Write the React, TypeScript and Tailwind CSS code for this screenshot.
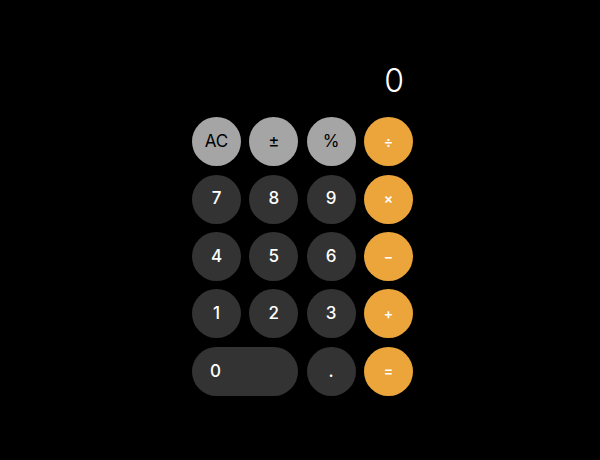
type Key = {
    label: string
    kind: 'fn' | 'num' | 'op'
    wide?: boolean
}

const keys: Key[] = [
    { label: 'AC', kind: 'fn' },
    { label: '±', kind: 'fn' },
    { label: '%', kind: 'fn' },
    { label: '÷', kind: 'op' },
    { label: '7', kind: 'num' },
    { label: '8', kind: 'num' },
    { label: '9', kind: 'num' },
    { label: '×', kind: 'op' },
    { label: '4', kind: 'num' },
    { label: '5', kind: 'num' },
    { label: '6', kind: 'num' },
    { label: '−', kind: 'op' },
    { label: '1', kind: 'num' },
    { label: '2', kind: 'num' },
    { label: '3', kind: 'num' },
    { label: '+', kind: 'op' },
    { label: '0', kind: 'num', wide: true },
    { label: '.', kind: 'num' },
    { label: '=', kind: 'op' },
]

const keyStyles = {
    fn: 'bg-[#a5a5a5] text-black text-[17px]',
    num: 'bg-[#333333] text-white text-[17px] font-medium',
    op: 'bg-[#eba53a] text-white text-sm font-semibold',
}

function CalcKey({ item }: { item: Key }) {
    if (item.wide) {
        return (
            <button className={`col-span-2 h-[49px] rounded-full flex items-center pl-[18px] ${keyStyles[item.kind]}`}>
                {item.label}
            </button>
        )
    }

    return (
        <button className={`w-[49px] h-[49px] rounded-full flex items-center justify-center ${keyStyles[item.kind]}`}>
            {item.label}
        </button>
    )
}

export default function App() {
    return (
        <div className="min-h-screen bg-black flex items-center justify-center pl-[5px] pb-[3px] font-['Inter',sans-serif]">
            <div className="w-[221px]">
                <div className="text-right text-white text-[32px] leading-10 font-light pr-[9px] mb-4">0</div>
                <div className="grid grid-cols-[repeat(4,49px)] gap-x-[8.3px] gap-y-[8.4px]">
                    {keys.map((k) => (
                        <CalcKey key={k.label} item={k} />
                    ))}
                </div>
            </div>
        </div>
    )
}
